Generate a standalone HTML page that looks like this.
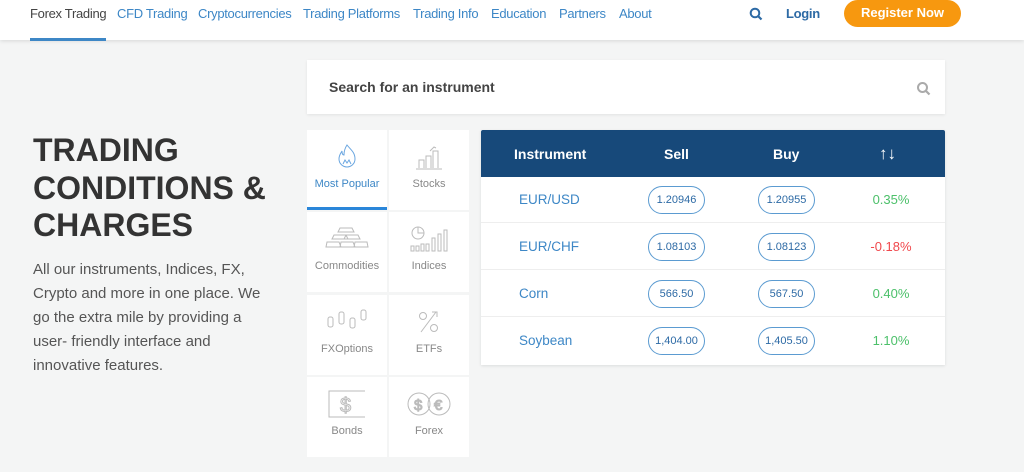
<!DOCTYPE html>
<html><head><meta charset="utf-8"><style>
*{margin:0;padding:0;box-sizing:border-box}
body{width:1024px;height:472px;overflow:hidden;background:#f4f5f5;font-family:"Liberation Sans",sans-serif;position:relative}
.nav{position:absolute;left:0;top:0;width:1024px;height:40px;background:#fff;box-shadow:0 1px 4px rgba(0,0,0,.12)}
.nav a{position:absolute;top:6px;font-size:13px;color:#3d87c6;text-decoration:none;white-space:nowrap;letter-spacing:-.3px}
.ul{position:absolute;left:30px;top:38px;width:76px;height:3px;background:#3d87c6}
.reg{position:absolute;left:844px;top:0;width:117px;height:27px;background:#f7980f;border-radius:14px;color:#fff;font-size:13px;font-weight:bold;text-align:center;line-height:26px}
h1{position:absolute;left:33px;top:132px;font-size:32px;line-height:37.5px;color:#333;font-weight:bold;letter-spacing:0}
p.d{position:absolute;left:33px;top:258px;width:260px;font-size:15px;line-height:24px;color:#555;white-space:nowrap}
.search{position:absolute;left:307px;top:60px;width:638px;height:54px;background:#fff;box-shadow:0 1px 3px rgba(0,0,0,.08)}
.search span{position:absolute;left:22px;top:19px;font-size:14px;font-weight:bold;color:#444}
.tile{position:absolute;width:80px;height:80px;background:#fff;text-align:center;font-size:11px;color:#888}
.tile svg{position:absolute;left:25px;top:12px}
.tile span{position:absolute;left:0;right:0;top:48px}
.tbl{position:absolute;left:481px;top:130px;width:464px;height:235px;background:#fff;box-shadow:0 1px 3px rgba(0,0,0,.1)}
.hd{position:absolute;left:0;top:0;width:464px;height:47px;background:#17497a;border-radius:2px 2px 0 0;color:#fff;font-weight:bold;font-size:14px}
.hd div,.row div{position:absolute;text-align:center}
.row{position:absolute;left:0;width:464px;height:46px;border-bottom:1px solid #eee}
.ins{left:38px;top:15px;font-size:13.5px;color:#3d87c6}
.pill{top:9px;width:57px;height:28px;border:1px solid #5b9bd1;border-radius:14px;font-size:11px;color:#2d6aa5;line-height:26px}
.pct{left:380px;width:60px;top:15px;font-size:13px}
</style></head><body>
<div class="nav">
<a style="left:30px;color:#444">Forex Trading</a>
<a style="left:117px">CFD Trading</a>
<a style="left:198px">Cryptocurrencies</a>
<a style="left:303px">Trading Platforms</a>
<a style="left:413px">Trading Info</a>
<a style="left:491px">Education</a>
<a style="left:559px">Partners</a>
<a style="left:619px">About</a>
<svg style="position:absolute;left:749px;top:7px" width="14" height="14" viewBox="0 0 14 14"><circle cx="6" cy="6" r="4.3" fill="none" stroke="#2d6aa5" stroke-width="2"/><path d="M9 9l3.5 3.5" stroke="#2d6aa5" stroke-width="2.2"/></svg>
<a style="left:786px;color:#2d6aa5;font-weight:bold">Login</a>
<div class="reg">Register Now</div>
<div class="ul"></div>
</div>
<h1>TRADING<br>CONDITIONS &amp;<br>CHARGES</h1>
<p class="d">All our instruments, Indices, FX,<br>Crypto and more in one place. We<br>go the extra mile by providing a<br>user- friendly interface and<br>innovative features.</p>
<div class="search"><span>Search for an instrument</span>
<svg style="position:absolute;left:609px;top:21px" width="15" height="15" viewBox="0 0 15 15"><circle cx="6.5" cy="6.5" r="4.5" fill="none" stroke="#aaa" stroke-width="2"/><path d="M10 10l3.5 3.5" stroke="#aaa" stroke-width="2.2"/></svg></div>

<div class="tile" style="left:307px;top:130px;color:#3d87c6"><svg width="30" height="30" viewBox="0 0 30 30" fill="none" stroke="#6aa6e0" stroke-width="1"><path d="M15 3c3 4 8 7 8 14a8 8 0 0 1-16 0c0-4 2-6 3-8 0 3 1 4 2 4 0-4 1-7 3-10z"/><path d="M11 22l2-4 2 3 2-3 2 4"/></svg><span>Most Popular</span><div style="position:absolute;left:0;bottom:0;width:80px;height:3px;background:#2a86d9"></div></div>
<div class="tile" style="left:389px;top:130px"><svg width="30" height="30" viewBox="0 0 30 30" fill="none" stroke="#bbb"><path d="M2 27h26M5 26v-8h5v8M12 26v-12h5v12M19 26v-17h5v17M16 9l4-4 2 1"/></svg><span>Stocks</span></div>
<div class="tile" style="left:307px;top:212px"><svg width="44" height="30" viewBox="0 0 44 30" style="left:18px" fill="none" stroke="#bbb"><path d="M15 4h12l2 4H13zM9 11h12l2 4H7zM21 11h12l2 4H19zM2 18h12l2 5H1zM16 18h12l2 5H15zM30 18h12l1 5H29z"/></svg><span>Commodities</span></div>
<div class="tile" style="left:389px;top:212px"><svg width="40" height="30" viewBox="0 0 40 30" style="left:20px" fill="none" stroke="#bbb"><circle cx="9" cy="9" r="6"/><path d="M9 3v6h6M2 22h3v5H2zM7 22h3v5H7zM12 20h3v7h-3zM17 20h3v7h-3zM23 14h3v13h-3zM29 10h3v17h-3zM35 6h3v21h-3z"/></svg><span>Indices</span></div>
<div class="tile" style="left:307px;top:295px"><svg width="42" height="30" viewBox="0 0 42 30" style="left:19px" fill="none" stroke="#bbb"><rect x="2" y="10" width="5" height="10" rx="2"/><rect x="13" y="5" width="5" height="12" rx="2"/><rect x="24" y="11" width="5" height="10" rx="2"/><rect x="35" y="3" width="5" height="10" rx="2"/></svg><span>FXOptions</span></div>
<div class="tile" style="left:389px;top:295px"><svg width="30" height="30" viewBox="0 0 30 30" fill="none" stroke="#bbb"><circle cx="9" cy="9" r="3.5"/><circle cx="20" cy="21" r="3.5"/><path d="M7 25l15-20M18 5h5v5"/></svg><span>ETFs</span></div>
<div class="tile" style="left:307px;top:377px"><svg width="40" height="30" viewBox="0 0 40 30" style="left:20px" fill="none" stroke="#bbb"><path d="M38 2H2v26h36"/><text x="13" y="23" font-size="20" fill="none" stroke="#bbb" font-family="Liberation Sans">$</text></svg><span>Bonds</span></div>
<div class="tile" style="left:389px;top:377px"><svg width="44" height="30" viewBox="0 0 44 30" style="left:18px" fill="none" stroke="#bbb"><circle cx="12" cy="15" r="11"/><circle cx="32" cy="15" r="11"/><text x="7" y="21" font-size="15" font-family="Liberation Sans" fill="#bbb">$</text><text x="27" y="21" font-size="15" font-family="Liberation Sans" fill="#bbb">€</text></svg><span>Forex</span></div>

<div class="tbl">
<div class="hd"><div style="left:33px;top:16px">Instrument</div><div style="left:183px;top:16px">Sell</div><div style="left:292px;top:16px">Buy</div><div style="left:398px;top:14px;font-size:17px">↑↓</div></div>
<div class="row" style="top:47px"><div class="ins">EUR/USD</div><div class="pill" style="left:167px">1.20946</div><div class="pill" style="left:277px">1.20955</div><div class="pct" style="color:#4cc06a">0.35%</div></div>
<div class="row" style="top:94px"><div class="ins">EUR/CHF</div><div class="pill" style="left:167px">1.08103</div><div class="pill" style="left:277px">1.08123</div><div class="pct" style="color:#f0484c">-0.18%</div></div>
<div class="row" style="top:141px"><div class="ins">Corn</div><div class="pill" style="left:167px">566.50</div><div class="pill" style="left:277px">567.50</div><div class="pct" style="color:#4cc06a">0.40%</div></div>
<div class="row" style="top:188px;border:0"><div class="ins">Soybean</div><div class="pill" style="left:167px">1,404.00</div><div class="pill" style="left:277px">1,405.50</div><div class="pct" style="color:#4cc06a">1.10%</div></div>
</div>
</body></html>
